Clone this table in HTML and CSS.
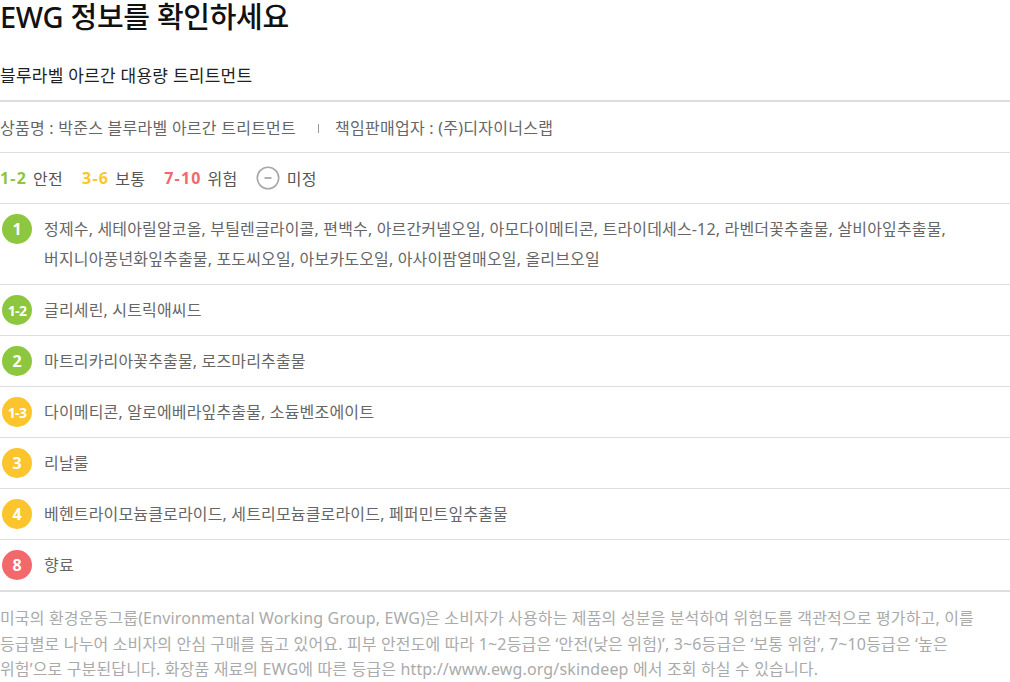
FILE: index.html
```html
<!DOCTYPE html>
<html lang="ko">
<head>
<meta charset="utf-8">
<link rel="stylesheet" href="styles.css">
</head>
<body>
<div class="page">
  <h1 class="title">EWG 정보를 확인하세요</h1>
  <h2 class="subtitle">블루라벨 아르간 대용량 트리트먼트</h2>
  <div class="info row-line">
    <span>상품명 : 박준스 블루라벨 아르간 트리트먼트</span>
    <span class="sep"></span>
    <span>책임판매업자 : (주)디자이너스랩</span>
  </div>
  <div class="legend row-line">
    <span class="lg"><b class="num green">1-2</b> 안전</span>
    <span class="lg"><b class="num yellow">3-6</b> 보통</span>
    <span class="lg"><b class="num red">7-10</b> 위험</span>
    <span class="lg"><svg class="minus" width="24" height="24" viewBox="0 0 24 24"><circle cx="12" cy="12" r="10.7" fill="none" stroke="#a8a8a8" stroke-width="1.6"/><line x1="8.5" y1="12" x2="15.5" y2="12" stroke="#a8a8a8" stroke-width="1.8"/></svg> 미정</span>
  </div>
  <ul class="list">
    <li class="item"><span class="badge bg-green">1</span><p class="names">정제수, 세테아릴알코올, 부틸렌글라이콜, 편백수, 아르간커넬오일, 아모다이메티콘, 트라이데세스-12, 라벤더꽃추출물, 살비아잎추출물, 버지니아풍년화잎추출물, 포도씨오일, 아보카도오일, 아사이팜열매오일, 올리브오일</p></li>
    <li class="item"><span class="badge bg-green small">1-2</span><p class="names">글리세린, 시트릭애씨드</p></li>
    <li class="item"><span class="badge bg-green">2</span><p class="names">마트리카리아꽃추출물, 로즈마리추출물</p></li>
    <li class="item"><span class="badge bg-yellow small">1-3</span><p class="names">다이메티콘, 알로에베라잎추출물, 소듐벤조에이트</p></li>
    <li class="item"><span class="badge bg-yellow">3</span><p class="names">리날룰</p></li>
    <li class="item"><span class="badge bg-yellow">4</span><p class="names">베헨트라이모늄클로라이드, 세트리모늄클로라이드, 페퍼민트잎추출물</p></li>
    <li class="item last"><span class="badge bg-red">8</span><p class="names">향료</p></li>
  </ul>
  <p class="note">미국의 환경운동그룹(Environmental Working Group, EWG)은 소비자가 사용하는 제품의 성분을 분석하여 위험도를 객관적으로 평가하고, 이를 등급별로 나누어 소비자의 안심 구매를 돕고 있어요. 피부 안전도에 따라 1~2등급은 ‘안전(낮은 위험)’, 3~6등급은 ‘보통 위험’, 7~10등급은 ‘높은 위험’으로 구분된답니다. 화장품 재료의 EWG에 따른 등급은 http://www.ewg.org/skindeep 에서 조회 하실 수 있습니다.</p>
</div>
</body>
</html>
```
FILE: styles.css
```css
* { box-sizing: border-box; }
html, body { margin: 0; padding: 0; background: #fff; }
body {
  font-family: "Noto Sans", "Noto Sans CJK KR", sans-serif;
  color: #666;
  word-break: keep-all;
}
.page { width: 1010px; }
.title {
  margin: 0;
  padding-top: 1px;
  font-size: 29px;
  font-weight: 500;
  color: #111;
  line-height: 32px;
  letter-spacing: -0.3px;
}
.subtitle {
  margin: 0;
  padding-top: 28px;
  font-size: 17px;
  font-weight: 400;
  color: #222;
  line-height: 30px;
  padding-bottom: 9px;
  letter-spacing: 0.25px;
  border-bottom: 2px solid #ddd;
}
.row-line {
  height: 51px;
  border-bottom: 1px solid #ddd;
  display: flex;
  align-items: center;
  font-size: 16px;
}
.info { color: #666; letter-spacing: 0.25px; }
.sep {
  display: inline-block;
  width: 1px;
  height: 9px;
  background: #999;
  margin: 2px 16px 0 22px;
}
.legend { gap: 19px; }
.lg { display: flex; align-items: center; gap: 6px; color: #555; letter-spacing: 0.3px; }
.num {
  font-family: "Open Sans", sans-serif;
  font-weight: 700;
  font-size: 16px;
  letter-spacing: 1.2px;
}
.green { color: #8dc63f; }
.yellow { color: #fcc52d; }
.red { color: #f3686b; }
.minus { display: block; margin-left: -1px; margin-right: 1px; }
.list { list-style: none; margin: 0; padding: 0; }
.item {
  display: flex;
  align-items: flex-start;
  padding: 10px 0 10px 2px;
  border-bottom: 1px solid #ddd;
}
.item.last { border-bottom: 2px solid #ddd; }
.badge {
  flex: none;
  width: 30px;
  height: 30px;
  border-radius: 50%;
  color: #fff;
  font-family: "Open Sans", sans-serif;
  font-weight: 700;
  font-size: 16px;
  display: flex;
  align-items: center;
  justify-content: center;
  margin-right: 12px;
}
.badge.small { font-size: 14px; letter-spacing: -0.6px; }
.bg-green { background: #8dc63f; }
.bg-yellow { background: #fcc52d; }
.bg-red { background: #f3686b; }
.names {
  margin: 0;
  font-size: 16px;
  line-height: 30px;
  color: #666;
  letter-spacing: 0.16px;
}
.note {
  margin: 0;
  padding-top: 14px;
  font-size: 16px;
  line-height: 25.5px;
  color: #aaa;
  letter-spacing: 0.15px;
}
```
